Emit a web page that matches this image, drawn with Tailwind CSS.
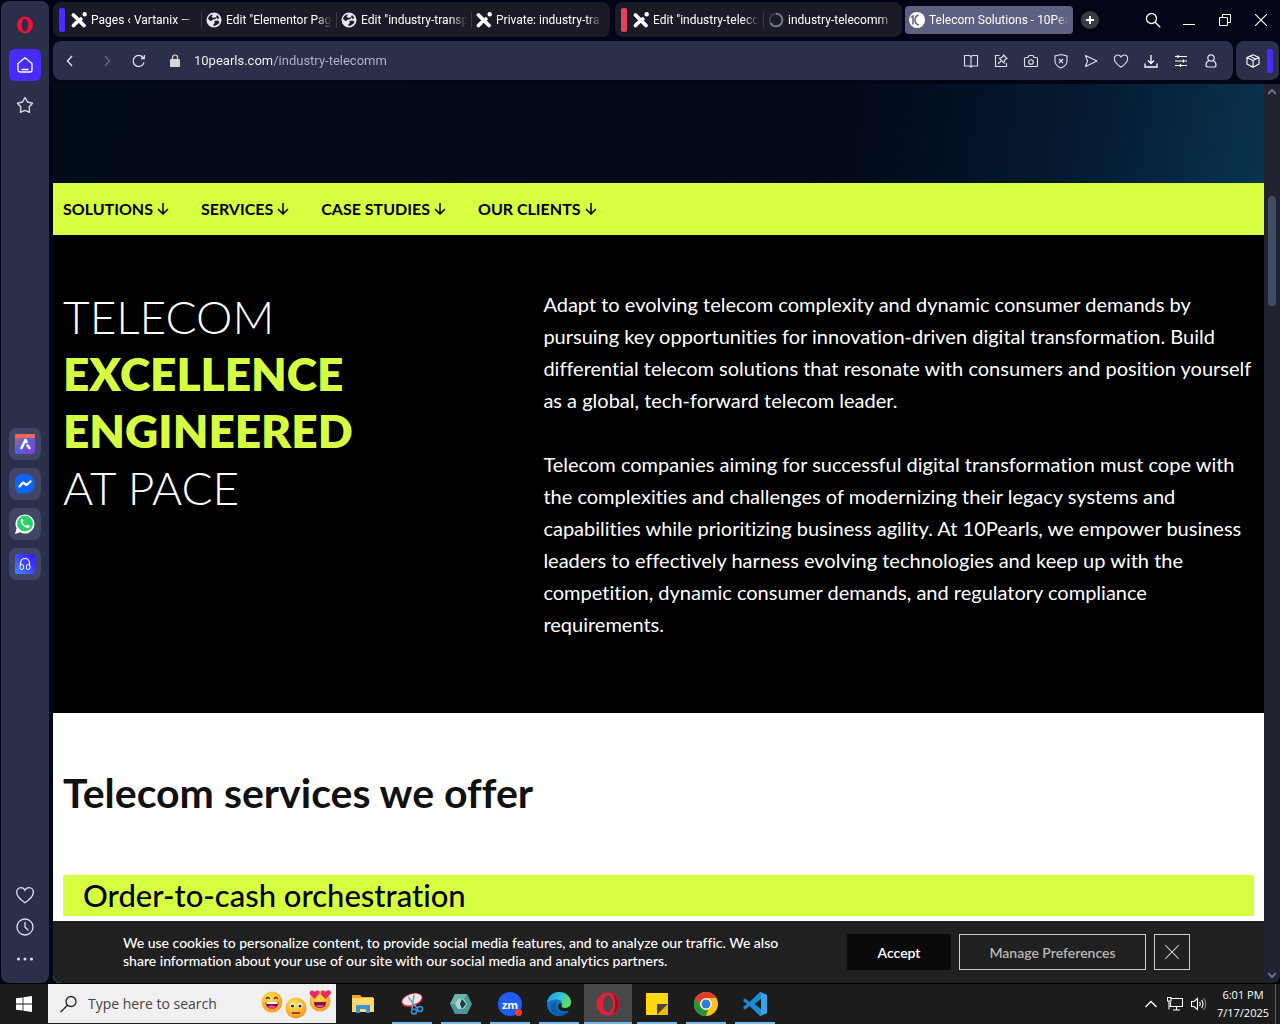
<!DOCTYPE html>
<html lang="en">
<head>
  <meta charset="UTF-8" />
  <meta name="viewport" content="width=device-width, initial-scale=1.0" />
  <title>Telecom Solutions - 10Pearls</title>
  <script src="https://cdn.jsdelivr.net/npm/@tailwindcss/browser@4"></script>
</head>
<body class="h-screen flex flex-col overflow-hidden bg-[#020515] font-['Open_Sans',sans-serif] text-white">

  <!-- shared icons -->
  <svg class="hidden">
    <symbol id="joomla" viewBox="0 0 16 16">
      <path d="M2.500 3 13 13.500M5.500 10.500 2.500 13.500M9.800 7 8.500 8.300" fill="none" stroke="#fff" stroke-width="3.800" stroke-linecap="round" />
      <circle cx="13.700" cy="2.300" r="2.200" fill="#fff" />
    </symbol>
    <symbol id="globe" viewBox="0 0 16 16">
      <circle cx="8" cy="8" r="7.500" fill="#e6e8ef" />
      <path d="M2 6.500C3 4 5 2.500 7 2.500L5.500 5 8 6l1.500-1 .5 2-3 .5L5 9c-1 0-2-1-3-2.500zM11 3l2.500 3-2 1L10 5zM8 9l4-.5 1.500 1.500c-1 2-3 3.500-5.500 4l-1-1 2-2.500z" fill="#1b1b28" />
    </symbol>
    <symbol id="heart" viewBox="0 0 18 18">
      <path d="M9 16C4 12.500 1.500 10 1.500 6.500 1.500 4 3.200 2.300 5.300 2.300 7 2.300 8.300 3.200 9 4.600c.7-1.400 2-2.300 3.700-2.300 2.100 0 3.800 1.700 3.800 4.200 0 3.500-2.500 6-7.500 9.500z" />
    </symbol>
  </svg>

  <div class="flex flex-1 min-h-0 gap-1 pl-px">

    <!-- browser sidebar -->
    <aside class="w-12 shrink-0 mt-px rounded-lg bg-[#2a3049] flex flex-col items-center justify-between py-2 text-[#dfe2ee]">
      <div class="flex flex-col gap-2 pb-2">
        <button aria-label="Opera menu" class="size-8 flex items-center justify-center">
          <svg class="size-[18px]" viewBox="0 0 18 18"><ellipse cx="9" cy="9" rx="8" ry="8.500" fill="#f5103b" /><ellipse cx="9" cy="9" rx="3.300" ry="6.300" fill="#2a3049" /></svg>
        </button>
        <button aria-label="Home" class="size-8 rounded-md bg-[#4a2bff] flex items-center justify-center">
          <svg class="size-[18px]" viewBox="0 0 18 18" fill="none" stroke="#fff" stroke-width="1.300" stroke-linejoin="round" stroke-linecap="round"><path d="M2 7.500 9 1.800l7 5.700v6.500a2 2 0 0 1-2 2H4a2 2 0 0 1-2-2zM6 13.500h6" /></svg>
        </button>
        <button aria-label="Bookmarks" class="size-8 flex items-center justify-center">
          <svg class="size-[18px]" viewBox="0 0 18 18" fill="none" stroke="currentColor" stroke-width="1.300" stroke-linejoin="round"><path d="m9 1.500 2.500 4.500 5 1.200-3.400 3.800.5 5.300L9 14.300l-4.600 2 .5-5.300L1.500 7.200l5-1.200z" /></svg>
        </button>
      </div>
      <div class="flex flex-col gap-2">
        <button aria-label="Aria" class="size-8 rounded-lg bg-[#404765] flex items-center justify-center">
          <svg class="size-5" viewBox="0 0 20 20">
            <defs><linearGradient id="ga" x1="0" y1="0" x2="1" y2="1"><stop offset="0" stop-color="#ff5138" /><stop offset=".4" stop-color="#5268d8" /><stop offset="1" stop-color="#8c35d6" /></linearGradient></defs>
            <rect width="20" height="20" rx="2" fill="url(#ga)" /><rect width="20" height="4" rx="1" fill="#ef6556" />
            <path d="m10.500 6-4 8M10.500 6l1 2M12.500 11.500l2 2.500" stroke="#fff" stroke-width="2.600" stroke-linecap="round" />
          </svg>
        </button>
        <button aria-label="Messenger" class="size-8 rounded-lg bg-[#404765] flex items-center justify-center">
          <svg class="size-5" viewBox="0 0 20 20"><path d="M10 0a10 9.700 0 1 1-4 18.700L2.500 20v-3A9.700 9.700 0 0 1 10 0z" fill="#0866ff" /><path d="m4.500 12.500 3.500-4 3.500 2.500 4-3.500" fill="none" stroke="#fff" stroke-width="2.300" stroke-linejoin="round" stroke-linecap="round" /></svg>
        </button>
        <button aria-label="WhatsApp" class="size-8 rounded-lg bg-[#404765] flex items-center justify-center">
          <svg class="size-[22px]" viewBox="0 0 22 22"><path d="m1 21 1.600-5.500a9.500 9.500 0 1 1 3.700 3.800z" fill="#fff" /><circle cx="11" cy="10.500" r="7.900" fill="#25d366" /><path d="M7.300 6.200c-1.500 1.500-.7 4 1.800 6.400s5.200 3 6.300 1.600c.5-.8.3-1.300-.3-1.600l-1.700-.9-1.300 1.100c-1.700-.6-3-1.900-3.600-3.500l1-1.300-.8-2c-.5-.5-1-.3-1.400.2z" fill="#fff" /></svg>
        </button>
        <button aria-label="Player" class="size-8 rounded-lg bg-[#404765] flex items-center justify-center">
          <svg class="size-5" viewBox="0 0 20 20">
            <defs><linearGradient id="gp" x1="0" y1="1" x2="1" y2="0"><stop offset="0" stop-color="#3a8dff" /><stop offset=".5" stop-color="#4048ff" /><stop offset="1" stop-color="#3a14ff" /></linearGradient></defs>
            <rect width="20" height="20" rx="2" fill="url(#gp)" />
            <path d="M5.500 11V9a4.500 4.500 0 0 1 9 0v2" fill="none" stroke="#fff" stroke-width="1.200" /><rect x="5" y="10.500" width="3.500" height="5" rx="1.700" fill="none" stroke="#fff" /><rect x="11.500" y="10.500" width="3.500" height="5" rx="1.700" fill="none" stroke="#fff" />
          </svg>
        </button>
      </div>
      <div class="flex flex-col">
        <button aria-label="Favourites" class="size-8 flex items-center justify-center"><svg class="size-5" viewBox="0 0 18 18" fill="none" stroke="currentColor" stroke-width="1.200"><use href="#heart" /></svg></button>
        <button aria-label="History" class="size-8 flex items-center justify-center"><svg class="size-[18px]" viewBox="0 0 18 18" fill="none" stroke="currentColor" stroke-width="1.300" stroke-linecap="round"><circle cx="9" cy="9" r="8" /><path d="M9 4.500V9l3 3" /></svg></button>
        <button aria-label="More" class="size-8 flex items-center justify-center"><svg class="size-[18px]" viewBox="0 0 18 18" fill="currentColor"><circle cx="2.500" cy="9" r="1.500" /><circle cx="9" cy="9" r="1.500" /><circle cx="15.500" cy="9" r="1.500" /></svg></button>
      </div>
    </aside>

    <div class="flex-1 min-w-0 flex flex-col gap-1 pt-0.5">

      <!-- tab strip -->
      <div class="h-[35px] shrink-0 flex items-center font-[Roboto,sans-serif] text-xs whitespace-nowrap">
        <div class="h-full flex items-center rounded-lg bg-[#1b1b28] pl-1.5 pr-2">
          <span class="w-1.5 h-6 rounded-xs bg-[#4a2bff] mr-1.5"></span>
          <button class="flex items-center gap-1 pr-1 border-r border-[#383846]"><svg class="size-4"><use href="#joomla" /></svg><span class="w-[106px] text-left mask-r-from-85%">Pages ‹ Vartanix —</span></button>
          <button class="flex items-center gap-1 pl-1 pr-1 border-r border-[#383846]"><svg class="size-4"><use href="#globe" /></svg><span class="w-[106px] text-left mask-r-from-85%">Edit "Elementor Pag</span></button>
          <button class="flex items-center gap-1 pl-1 pr-1 border-r border-[#383846]"><svg class="size-4"><use href="#globe" /></svg><span class="w-[106px] text-left mask-r-from-85%">Edit "industry-transp</span></button>
          <button class="flex items-center gap-1 pl-1"><svg class="size-4"><use href="#joomla" /></svg><span class="w-[106px] text-left mask-r-from-85%">Private: industry-tra</span></button>
        </div>
        <div class="h-full flex items-center rounded-lg bg-[#1b1b28] ml-[5px] pl-1.5 pr-2">
          <span class="w-1.5 h-6 rounded-xs bg-[#e5405e] mr-1.5"></span>
          <button class="flex items-center gap-1 pr-1 border-r border-[#383846]"><svg class="size-4"><use href="#joomla" /></svg><span class="w-[106px] text-left mask-r-from-85%">Edit "industry-telecc</span></button>
          <button class="flex items-center gap-1 pl-1">
            <svg class="size-4" viewBox="0 0 16 16" fill="none" stroke-width="2"><circle cx="8" cy="8" r="6.300" stroke="#3c3d4b" /><path d="M8 1.700A6.300 6.300 0 1 1 2.500 11" stroke="#777a89" /></svg>
            <span class="w-[106px] text-left mask-r-from-85%">industry-telecomm</span>
          </button>
        </div>
        <button class="h-7 flex items-center gap-1 rounded-sm bg-[#5d6080] ml-[3px] px-1">
          <svg class="size-4" viewBox="0 0 16 16"><circle cx="8" cy="8" r="8" fill="#fff" /><path d="m2 5.500 2-1.500v8.500M9.500 3C6.500 4 6 6 6 8s.8 4.300 4 5" fill="none" stroke="#5d6080" stroke-width="1.500" /></svg>
          <span class="w-[140px] text-left mask-r-from-90%">Telecom Solutions - 10Pea</span>
        </button>
        <button aria-label="New tab" class="ml-2 size-[18px] rounded-full bg-[#3a3b45] flex items-center justify-center">
          <svg class="size-2" viewBox="0 0 8 8" stroke="#fff" stroke-width="2"><path d="M4 0v8M0 4h8" /></svg>
        </button>
        <div class="ml-auto flex pr-px">
          <button aria-label="Search tabs" class="w-9 h-8 flex items-center justify-center"><svg class="size-4" viewBox="0 0 16 16" fill="none" stroke="#fff" stroke-width="1.300"><circle cx="6.500" cy="6.500" r="5" /><path d="m10.200 10.200 5 5" /></svg></button>
          <button aria-label="Minimize" class="w-9 h-8 flex items-center justify-center"><svg class="size-3" viewBox="0 0 12 12" stroke="#fff"><path d="M0 10.500h12" /></svg></button>
          <button aria-label="Restore" class="w-9 h-8 flex items-center justify-center"><svg class="size-3" viewBox="0 0 12 12" fill="none" stroke="#fff"><path d="M.5 3.500h8v8h-8zM3.500 3.500v-3h8v8h-3" /></svg></button>
          <button aria-label="Close" class="w-9 h-8 flex items-center justify-center"><svg class="size-3" viewBox="0 0 12 12" stroke="#fff" stroke-width="1.100"><path d="m0 0 12 12M12 0 0 12" /></svg></button>
        </div>
      </div>

      <!-- address bar -->
      <div class="h-[39px] shrink-0 flex gap-[3px] pr-px text-[#dfe2ee]">
        <div class="flex-1 flex items-center rounded-lg bg-[#2a3049] pl-0.5 pr-[7px]">
          <button aria-label="Back" class="w-8 h-8 flex items-center justify-center"><svg class="size-3" viewBox="0 0 12 12" fill="none" stroke="currentColor" stroke-width="1.400"><path d="M7 1 2.500 6 7 11" /></svg></button>
          <button aria-label="Forward" class="w-8 h-8 ml-1 flex items-center justify-center text-[#5e6480]"><svg class="size-3" viewBox="0 0 12 12" fill="none" stroke="currentColor" stroke-width="1.400"><path d="m4 1 4.500 5L4 11" /></svg></button>
          <button aria-label="Reload" class="w-8 h-8 flex items-center justify-center"><svg class="size-3.5" viewBox="0 0 14 14" fill="none" stroke="currentColor" stroke-width="1.300"><path d="M12 8.500A5.500 5.500 0 1 1 11 3.500l1 1M12.300 1v3.500H9" /></svg></button>
          <svg class="ml-3.5 w-3 h-3.5" viewBox="0 0 12 14"><rect x="1" y="5" width="10" height="8" rx="1" fill="#d5d8d8" /><path d="M3.500 6V3.500a2.500 2.500 0 0 1 5 0V6" fill="none" stroke="#d5d8d8" stroke-width="1.200" /></svg>
          <input type="text" aria-label="Address" value="10pearls.com/industry-telecomm" class="ml-[13px] flex-1 min-w-0 font-[Roboto,sans-serif] text-[13px] outline-none text-transparent bg-clip-text bg-[linear-gradient(90deg,#fff_78px,#b3b8cc_78px)]" />
          <button aria-label="Reader" class="w-[30px] h-8 flex items-center justify-center"><svg class="size-4" viewBox="0 0 16 16" fill="none" stroke="currentColor" stroke-width="1.100"><path d="M1.500 2.500h5L8 3.500l1.500-1h5v10.500H9.500L8 14l-1.500-1h-5zM8 3.500V14" /></svg></button>
          <button aria-label="Notes" class="w-[30px] h-8 flex items-center justify-center"><svg class="size-4" viewBox="0 0 16 16" fill="none" stroke="currentColor" stroke-width="1.100"><path d="M6.500 2.500h-4v11h11V10M5 11l3.500-3.500M10.500 2l3.500 3.500-2 1-1 3.500L6.500 5.500 9.500 4z" /></svg></button>
          <button aria-label="Snapshot" class="w-[30px] h-8 flex items-center justify-center"><svg class="size-4" viewBox="0 0 16 16" fill="none" stroke="currentColor" stroke-width="1.100" stroke-linejoin="round"><path d="M2.500 4.500H5L6 2.500h4l1 2h2.500a1 1 0 0 1 1 1v7a1 1 0 0 1-1 1h-11a1 1 0 0 1-1-1v-7a1 1 0 0 1 1-1z" /><circle cx="8" cy="9" r="2.300" /></svg></button>
          <button aria-label="Ad blocker" class="w-[30px] h-8 flex items-center justify-center"><svg class="size-4" viewBox="0 0 16 16" fill="none" stroke="currentColor" stroke-width="1.100"><path d="M8 1.500 14 3v5c0 3.500-2.500 5.500-6 7-3.500-1.500-6-3.500-6-7V3zM6 6l4 4M10 6l-4 4" /></svg></button>
          <button aria-label="Flow" class="w-[30px] h-8 flex items-center justify-center"><svg class="size-4" viewBox="0 0 16 16" fill="none" stroke="currentColor" stroke-width="1.100" stroke-linejoin="round"><path d="M2.500 2.500 14 8 2.500 13.500 4.500 8z" /></svg></button>
          <button aria-label="Save" class="w-[30px] h-8 flex items-center justify-center"><svg class="size-4" viewBox="0 0 18 18" fill="none" stroke="currentColor" stroke-width="1.200"><use href="#heart" /></svg></button>
          <button aria-label="Downloads" class="w-[30px] h-8 flex items-center justify-center"><svg class="size-4" viewBox="0 0 16 16" fill="none" stroke="#fff" stroke-width="1.300"><path d="M8 2v8M5 7.500 8 10.500l3-3M2 10.500v3.500h12v-3.500" /></svg></button>
          <button aria-label="Easy setup" class="w-[30px] h-8 flex items-center justify-center"><svg class="size-4" viewBox="0 0 16 16" fill="none" stroke="#fff" stroke-width="1.200"><path d="M2 3.500h12M2 8h12M2 12.500h12M5 2v3M10.500 6.500v3M7.500 11v3" /></svg></button>
          <button aria-label="Profile" class="w-[30px] h-8 flex items-center justify-center"><svg class="size-4" viewBox="0 0 16 16" fill="none" stroke="currentColor" stroke-width="1.200"><circle cx="8" cy="5" r="3.200" /><path d="M5.800 7.500C4 8.500 3 10 3 12c0 1.200.7 2 2 2h6c1.300 0 2-.8 2-2 0-2-1-3.500-2.800-4.500" /></svg></button>
        </div>
        <div class="w-[43px] rounded-lg bg-[#2a3049] flex items-center justify-end gap-[7px] pr-1.5">
          <button aria-label="Extensions" class="size-3.5"><svg viewBox="0 0 14 14" fill="none" stroke="#fff" stroke-width="1.100" stroke-linejoin="round"><path d="M7 .8 13 3.500v6.500L7 13.200 1 10V3.500zM1 3.500l6 3 6-3M7 6.500v6.500M4 2.200l6 3" /></svg></button>
          <span class="w-1.5 h-6 rounded-xs bg-[#4a2bff]"></span>
        </div>
      </div>

      <!-- page viewport -->
      <div class="flex-1 min-h-0 flex">
        <div class="relative flex-1 min-w-0 overflow-hidden rounded-bl-lg bg-white font-[Lato,sans-serif] [font-variant-ligatures:none]">
          <div class="h-[99px] bg-[linear-gradient(100deg,#020b18_0%,#040918_35%,#03091b_65%,#041a30_84%,#093350_100%)]"></div>

          <nav class="h-[52px] flex items-center gap-8 px-2.5 bg-[#d6ff41] text-black text-[16px] font-bold whitespace-nowrap">
            <a href="#solutions" class="flex items-center gap-1">SOLUTIONS <svg class="size-3" viewBox="0 0 12 12" fill="none" stroke="#000" stroke-width="1.500"><path d="M6 0v11M1 6l5 5 5-5" /></svg></a>
            <a href="#services" class="flex items-center gap-1">SERVICES <svg class="size-3" viewBox="0 0 12 12" fill="none" stroke="#000" stroke-width="1.500"><path d="M6 0v11M1 6l5 5 5-5" /></svg></a>
            <a href="#cases" class="flex items-center gap-1">CASE STUDIES <svg class="size-3" viewBox="0 0 12 12" fill="none" stroke="#000" stroke-width="1.500"><path d="M6 0v11M1 6l5 5 5-5" /></svg></a>
            <a href="#clients" class="flex items-center gap-1">OUR CLIENTS <svg class="size-3" viewBox="0 0 12 12" fill="none" stroke="#000" stroke-width="1.500"><path d="M6 0v11M1 6l5 5 5-5" /></svg></a>
          </nav>

          <section id="solutions" class="bg-black grid grid-cols-[40%_1fr] gap-1 px-2.5 pt-[53px] pb-[73px]">
            <h1 class="text-[46px] leading-[57px] font-light">TELECOM<br /><span class="font-extrabold text-[#d6ff41]">EXCELLENCE<br />ENGINEERED</span><br />AT PACE</h1>
            <div class="text-[20px] leading-8 whitespace-nowrap">
              <p>Adapt to evolving telecom complexity and dynamic consumer demands by<br />pursuing key opportunities for innovation-driven digital transformation. Build<br />differential telecom solutions that resonate with consumers and position yourself<br />as a global, tech-forward telecom leader.</p>
              <p class="mt-8">Telecom companies aiming for successful digital transformation must cope with<br />the complexities and challenges of modernizing their legacy systems and<br />capabilities while prioritizing business agility. At 10Pearls, we empower business<br />leaders to effectively harness evolving technologies and keep up with the<br />competition, dynamic consumer demands, and regulatory compliance<br />requirements.</p>
            </div>
          </section>

          <section id="services" class="px-2.5 pt-14 text-[#111]">
            <h2 class="text-[41px] leading-[48px] font-bold">Telecom services we offer</h2>
            <h3 class="mt-[58px] px-5 rounded-xs bg-[#d6ff41] text-black text-[31px] leading-[41px] font-medium">Order-to-cash orchestration</h3>
          </section>

          <!-- cookie notice -->
          <div class="absolute inset-x-0 bottom-0 h-[62px] flex items-center justify-between bg-[#202020] pl-[70px] pr-[74px] text-white">
            <p class="text-[14px] leading-[18px] font-medium whitespace-nowrap">We use cookies to personalize content, to provide social media features, and to analyze our traffic. We also<br />share information about your use of our site with our social media and analytics partners.</p>
            <div class="flex gap-2 text-[14px] font-semibold whitespace-nowrap">
              <button class="w-[104px] h-9 bg-[#0a0a0a]">Accept</button>
              <button class="w-[187px] h-9 border border-[#d0d0d0] text-[#b8b8b8]">Manage Preferences</button>
              <button aria-label="Dismiss" class="size-9 border border-[#d0d0d0] flex items-center justify-center"><svg class="size-3.5" viewBox="0 0 14 14" stroke="#c4c4c4" stroke-width="1.100"><path d="m0 0 14 14M14 0 0 14" /></svg></button>
            </div>
          </div>
        </div>

        <!-- scrollbar -->
        <div class="w-4 rounded-br-lg bg-[#20222f] flex flex-col items-center py-1">
          <svg class="size-2" viewBox="0 0 8 8" fill="none" stroke="#6d7080" stroke-width="2"><path d="m0 6 4-4 4 4" /></svg>
          <div class="mt-[100px] w-2 h-[110px] rounded-sm bg-[#454a63]"></div>
          <svg class="mt-auto size-2" viewBox="0 0 8 8" fill="none" stroke="#6d7080" stroke-width="2"><path d="m0 2 4 4 4-4" /></svg>
        </div>
      </div>
    </div>
  </div>

  <!-- windows taskbar -->
  <footer class="h-[41px] shrink-0 border-t border-black bg-[#1c1c1c] flex items-stretch">
    <button aria-label="Start" class="w-12 flex items-center justify-center"><svg class="size-4" viewBox="0 0 16 16" fill="#fff"><path d="M0 2.300 6.600 1.400v6.200H0zM7.400 1.300 16 0v7.600H7.400zM0 8.400h6.600v6.200L0 13.700zM7.400 8.400H16V16l-8.600-1.300z" /></svg></button>
    <div class="w-72 mb-px bg-[#f0f0f0] flex items-center pl-3 pr-1">
      <svg class="size-[18px] shrink-0" viewBox="0 0 18 18" fill="none" stroke="#222" stroke-width="1.300"><circle cx="11" cy="6.500" r="5" /><path d="m7.500 10.200-7 7" /></svg>
      <input type="text" aria-label="Search" placeholder="Type here to search" class="ml-2.5 flex-1 min-w-0 text-[14px] outline-none placeholder:text-[#444]" />
      <svg class="w-[72px] h-[30px] shrink-0" viewBox="0 0 72 30">
        <defs><radialGradient id="face" cx=".4" cy=".3" r=".8"><stop offset="0" stop-color="#ffe14d" /><stop offset="1" stop-color="#f78f22" /></radialGradient></defs>
        <circle cx="12" cy="13" r="10.500" fill="url(#face)" />
        <path d="M5.500 13h13c0 4-2.500 7-6.500 7s-6.500-3-6.500-7z" fill="#7c1648" /><path d="M6.500 13h11v2h-11z" fill="#fff" /><path d="M8 18c2-2 6-2 8 0-2 2.500-6 2.500-8 0z" fill="#fb4a8c" />
        <path d="M6 10c.5-2 3-2 3.500 0M14 10c.5-2 3-2 3.500 0" fill="none" stroke="#5b2b1c" stroke-width="1.300" />
        <circle cx="36" cy="19" r="10.500" fill="url(#face)" />
        <ellipse cx="32.500" cy="16.500" rx="2.300" ry="2.800" fill="#fff" /><ellipse cx="40" cy="16.500" rx="2.300" ry="2.800" fill="#fff" />
        <circle cx="32.500" cy="17" r="1.500" fill="#3c2318" /><circle cx="40" cy="17" r="1.500" fill="#3c2318" /><path d="M32 24h8" stroke="#5b2b1c" stroke-width="1.500" />
        <circle cx="60" cy="12" r="10.500" fill="url(#face)" />
        <path d="M54.500 10 50 5.500C48.500 2 52.500 0 54.500 3c1.500-2.500 6-2 5 1.500zM65.500 10 61 5.500C59.500 2 63.500 0 65.500 3c1.500-3 6.500-2 5.500 1.500z" fill="#ee2a63" />
        <path d="M54 13h12c0 4-2.500 6-6 6s-6-2-6-6z" fill="#7c1648" /><path d="M56 17c2-1.500 6-1.500 8 0-2 2-6 2-8 0z" fill="#fb4a8c" />
      </svg>
    </div>

    <div class="flex gap-px ml-[3px]">
      <button aria-label="File Explorer" class="w-12 flex items-center justify-center">
        <svg class="size-6" viewBox="0 0 24 24"><path d="M1 3h8l2 2h11v15H1z" fill="#e9a820" /><path d="M1 6h22v14H1z" fill="#ffd968" /><path d="M5 13h14v8h-4v-4H9v4H5z" fill="#3c93dd" /></svg>
      </button>
      <button aria-label="Snipping Tool" class="w-12 bg-[linear-gradient(#76b9ed,#76b9ed)] bg-no-repeat bg-bottom bg-size-[40px_2px] flex items-center justify-center">
        <svg class="size-6" viewBox="0 0 24 24"><ellipse cx="12" cy="8" rx="11" ry="6.500" fill="#d4253c" transform="rotate(-18 12 8)" /><ellipse cx="12" cy="7.500" rx="10" ry="5.300" fill="#e8e8ea" transform="rotate(-18 12 7.500)" /><path d="m8 5 9 11M14 3l-2 14" stroke="#8d98a2" stroke-width="1.500" /><circle cx="14" cy="19.500" r="2.500" fill="none" stroke="#3c93dd" stroke-width="1.600" /><circle cx="20" cy="17" r="2.500" fill="none" stroke="#3c93dd" stroke-width="1.600" /></svg>
      </button>
      <button aria-label="Hexagon app" class="w-12 bg-[linear-gradient(#76b9ed,#76b9ed)] bg-no-repeat bg-bottom bg-size-[40px_2px] flex items-center justify-center">
        <svg class="size-6" viewBox="0 0 24 24"><path d="M6 2h12l5 10-5 10H6L1 12z" fill="#4f9696" /><path d="M6 2h12l-3 5H9l-3 5H1z" fill="#6fb3ae" /><path d="M9 7h6l3 5-3 5H9l-3-5z" fill="#a9d3cf" /><path d="m13 7 4 5-4 5-2-5z" fill="#153f48" /></svg>
      </button>
      <button aria-label="Zoom" class="w-12 bg-[linear-gradient(#76b9ed,#76b9ed)] bg-no-repeat bg-bottom bg-size-[40px_2px] flex items-center justify-center">
        <span class="relative size-6 rounded-full bg-[#1f5cf0] flex items-center justify-center text-[11px] leading-none font-bold">zm<span class="absolute right-0 bottom-0 size-[7px] rounded-full bg-[#ff3b30]"></span></span>
      </button>
      <button aria-label="Edge" class="w-12 bg-[linear-gradient(#76b9ed,#76b9ed)] bg-no-repeat bg-bottom bg-size-[40px_2px] flex items-center justify-center">
        <svg class="size-6" viewBox="0 0 24 24">
          <defs><linearGradient id="ge" x1="0" y1="0" x2="1" y2=".3"><stop offset="0" stop-color="#199be2" /><stop offset=".6" stop-color="#35c1d6" /><stop offset="1" stop-color="#66dd55" /></linearGradient></defs>
          <circle cx="12" cy="12" r="12" fill="#1273c9" /><path d="M0 11C1 4 6 0 12 0c7 0 12 5 12 10 0 4-3 6-6 6-3 0-4-1-3.500-2 2-3-.5-6.500-4.500-6.500C5 7.500 1 9 0 11z" fill="url(#ge)" /><path d="M9 12c-1.500 6 4 10 12 8-4 5-14 5.500-17-2-1.500-4 1-8 6-8.500-.6.800-.8 1.500-1 2.500z" fill="#0c59a4" /><path d="M14.500 14c-.5 1 .5 2 3.500 2s6-2 6-4v6c-6 3-13 1-13-3.500 0-2 1-3 2-3 2 0 2 1.500 1.500 2.500z" fill="#1c1c1c" />
        </svg>
      </button>
      <button aria-label="Opera" class="w-12 bg-[#484848] bg-[linear-gradient(#76b9ed,#76b9ed)] bg-no-repeat bg-bottom bg-size-[48px_2px] flex items-center justify-center">
        <svg class="size-6" viewBox="0 0 24 24"><circle cx="12" cy="12" r="11.500" fill="#e3203a" /><path d="M15 1a11.500 11.500 0 0 1 0 22c3-2 4-6 4-11s-1-9-4-11z" fill="#a50e22" /><ellipse cx="12" cy="12" rx="5" ry="8.500" fill="#484848" /></svg>
      </button>
      <button aria-label="Sticky Notes" class="w-12 bg-[linear-gradient(#76b9ed,#76b9ed)] bg-no-repeat bg-bottom bg-size-[40px_2px] flex items-center justify-center">
        <svg class="size-[22px]" viewBox="0 0 22 22"><path d="M0 0h22v11L12 22H0z" fill="#ffd80d" /><path d="M11 11h11L11 22z" fill="#4a4638" /><path d="M22 11v11H11z" fill="#f0b800" /></svg>
      </button>
      <button aria-label="Chrome" class="w-12 bg-[linear-gradient(#76b9ed,#76b9ed)] bg-no-repeat bg-bottom bg-size-[40px_2px] flex items-center justify-center">
        <svg class="size-6" viewBox="0 0 24 24"><circle cx="12" cy="12" r="12" fill="#fbc116" /><path d="M1.600 6A12 12 0 0 1 22.400 6H12a6 6 0 0 0-5.200 9z" fill="#e33b2e" /><path d="M1.600 6 6.800 15A6 6 0 0 0 14 17.700L12 24A12 12 0 0 1 1.600 6z" fill="#229342" /><circle cx="12" cy="12" r="5.800" fill="#fff" /><circle cx="12" cy="12" r="4.500" fill="#2f7de1" /></svg>
      </button>
      <button aria-label="Visual Studio Code" class="w-12 bg-[linear-gradient(#76b9ed,#76b9ed)] bg-no-repeat bg-bottom bg-size-[40px_2px] flex items-center justify-center">
        <svg class="size-6" viewBox="0 0 24 24"><path d="M17 0 24 3v18l-7 3L6.500 14 2 17.500.5 16.500v-2L4 12 .5 9.500v-2L2 6.500 6.500 10zM18 7l-6.500 5 6.500 5z" fill="#1f8ad2" /><path d="M17 0 24 3v18l-7 3 1-2V2z" fill="#35a5ee" /></svg>
      </button>
    </div>

    <div class="ml-auto flex items-center">
      <button aria-label="Hidden icons" class="w-6 flex justify-center"><svg class="w-3 h-2" viewBox="0 0 12 8" fill="none" stroke="#fff" stroke-width="1.300"><path d="m.5 7 5.500-5.500L11.500 7" /></svg></button>
      <button aria-label="Network" class="w-6 flex justify-center"><svg class="w-4 h-3.5" viewBox="0 0 16 14" fill="none" stroke="#fff" stroke-width="1.100"><path d="M4.500 1.500h11v8h-12V5M9.500 9.500v3M6 13h7M.5.500h3.500v3.500H.5zM2 4v8.500" /></svg></button>
      <button aria-label="Volume" class="w-6 flex justify-center"><svg class="w-4 h-3.5" viewBox="0 0 16 14" fill="none" stroke="#fff" stroke-width="1.100"><path d="M.5 4.500h2.500L6.500 1.500v11L3 9.500H.5zM8.500 5c1 1 1 3 0 4M10.500 3c2 2 2 6 0 8" /><path d="M12.500 1c3 3.500 3 8.500 0 12" stroke="#888" /></svg></button>
      <button class="w-16 text-center text-[11px] leading-[18px]">6:01 PM<br />7/17/2025</button>
      <span class="h-full border-l border-[#5c5c5c] mr-1"></span>
    </div>
  </footer>
</body>
</html>
